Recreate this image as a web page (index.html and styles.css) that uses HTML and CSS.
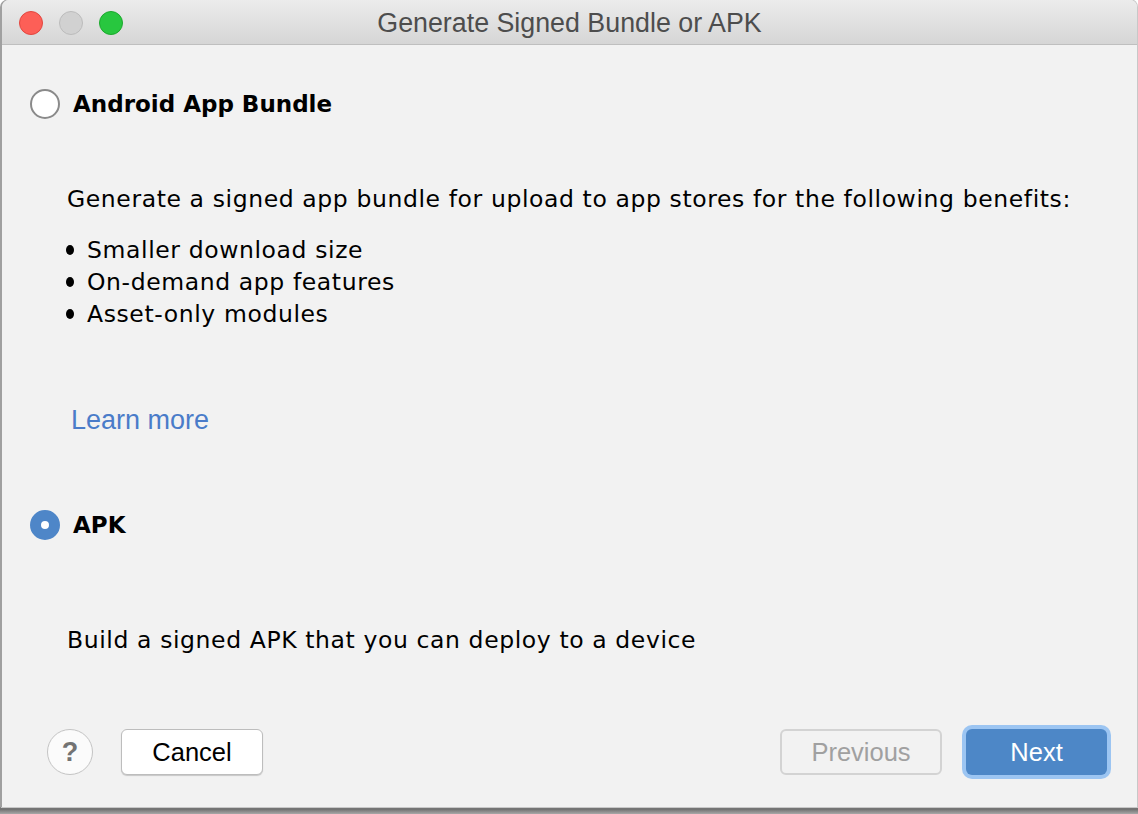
FILE: index.html
```html
<!DOCTYPE html>
<html>
<head>
<meta charset="utf-8">
<link rel="stylesheet" href="styles.css">
</head>
<body>
<div class="window">
  <div class="titlebar">
    <div class="lights">
      <span class="light red"></span>
      <span class="light gray"></span>
      <span class="light green"></span>
    </div>
    <div class="title">Generate Signed Bundle or APK</div>
  </div>
  <div class="content">
    <div class="radio-row first">
      <span class="radio"></span>
      <span class="radio-label">Android App Bundle</span>
    </div>
    <p class="desc desc-bundle">Generate a signed app bundle for upload to app stores for the following benefits:</p>
    <ul class="benefits">
      <li><span class="dot"></span>Smaller download size</li>
      <li><span class="dot"></span>On-demand app features</li>
      <li><span class="dot"></span>Asset-only modules</li>
    </ul>
    <a class="learn">Learn more</a>
    <div class="radio-row apk">
      <span class="radio checked"></span>
      <span class="radio-label">APK</span>
    </div>
    <p class="desc desc-apk">Build a signed APK that you can deploy to a device</p>
  </div>
  <div class="footer">
    <button class="help">?</button>
    <button class="btn cancel">Cancel</button>
    <span class="spacer"></span>
    <button class="btn prev">Previous</button>
    <button class="btn next">Next</button>
  </div>
</div>
</body>
</html>
```
FILE: styles.css
```css
html, body {
  margin: 0;
  padding: 0;
  background: #ffffff;
}
body {
  width: 1138px;
  height: 814px;
  overflow: hidden;
  font-family: "DejaVu Sans", "Liberation Sans", sans-serif;
  background: linear-gradient(to bottom, #ffffff 0, #ffffff 790px, #8a8a8a 807px, #6e6e6e 809px, #a8a8a8 814px);
}
.window {
  margin-left: 2px;
  width: 1135px;
  height: 807px;
  background: #f2f2f2;
  border-radius: 7px 7px 0 0;
  box-shadow: -2px 0 0 #a0a0a0, 0 0 0 1px #c8c8c8;
  display: flex;
  flex-direction: column;
  overflow: hidden;
}
.titlebar {
  height: 44px;
  border-bottom: 1px solid #bfbfbf;
  background: linear-gradient(to bottom, #ececec, #d6d6d6);
  position: relative;
  display: flex;
  align-items: center;
  justify-content: center;
  flex: none;
}
.lights {
  position: absolute;
  left: 17px;
  top: 11px;
  display: flex;
  gap: 16px;
}
.light {
  width: 24px;
  height: 24px;
  border-radius: 50%;
  box-sizing: border-box;
}
.light.red { background: #fd5f57; border: 1px solid #e2463f; }
.light.gray { background: #d1d1d1; border: 1px solid #bcbcbc; }
.light.green { background: #28c73f; border: 1px solid #1ca92d; }
.title {
  font-family: "Liberation Sans", Arial, sans-serif;
  font-size: 26.8px;
  color: #4d4d4d;
  margin-top: 2px;
}
.content {
  padding: 0 28px;
  flex: none;
}
.radio-row {
  display: flex;
  align-items: center;
  gap: 13px;
  height: 30px;
}
.radio-row.first { margin-top: 44px; }
.radio-row.apk { margin-top: 74px; }
.radio {
  width: 30px;
  height: 30px;
  border-radius: 50%;
  box-sizing: border-box;
  border: 2px solid #8a8a8a;
  background: #ffffff;
  flex: none;
}
.radio.checked {
  border: 11px solid #4e86c8;
  background: #ffffff;
}
.radio-label {
  font-family: "DejaVu Sans", sans-serif;
  font-weight: bold;
  font-size: 23px;
  color: #000;
}
.desc {
  margin: 0;
  font-size: 23.5px;
  letter-spacing: 0.6px;
  line-height: 32px;
  color: #000;
  padding-left: 37px;
}
.desc-bundle { margin-top: 64px; }
.desc-apk { margin-top: 84px; }
.benefits {
  list-style: none;
  margin: 19px 0 0 0;
  padding: 0 0 0 36px;
  font-size: 23.5px;
  letter-spacing: 0.6px;
  line-height: 32px;
  color: #000;
}
.benefits li {
  display: flex;
  align-items: center;
}
.dot {
  width: 8px;
  height: 10px;
  border-radius: 50%;
  background: #000;
  margin-right: 13px;
  flex: none;
}
.learn {
  display: block;
  margin-top: 74px;
  padding-left: 41px;
  font-family: "Liberation Sans", Arial, sans-serif;
  font-size: 27px;
  line-height: 32px;
  color: #4a7cc9;
}
.footer {
  margin-top: auto;
  display: flex;
  align-items: center;
  padding: 0 30px 32px 45px;
  gap: 28px;
}
.spacer { flex: 1; }
button {
  font-family: "Liberation Sans", Arial, sans-serif;
  font-size: 25.5px;
  box-sizing: border-box;
  height: 46px;
  margin: 0;
}
.help {
  width: 46px;
  height: 46px;
  border-radius: 50%;
  border: 1px solid #c4c4c4;
  background: #fbfbfb;
  color: #737373;
  font-weight: bold;
  font-size: 27px;
  padding: 0;
  line-height: 44px;
}
.btn {
  border-radius: 6px;
  padding: 0;
}
.cancel {
  width: 142px;
  border: 1px solid #bdbdbd;
  background: #ffffff;
  color: #000;
  box-shadow: 0 1px 1px rgba(0,0,0,0.18);
}
.prev {
  width: 162px;
  border: 2px solid #d3d3d3;
  background: #f2f2f2;
  color: #a0a0a0;
}
.next {
  width: 141px;
  height: 46px;
  border: none;
  background: #4d87c7;
  color: #ffffff;
  margin-left: -4px;
  box-shadow: 0 0 0 4px #9cc5f2;
}
```
